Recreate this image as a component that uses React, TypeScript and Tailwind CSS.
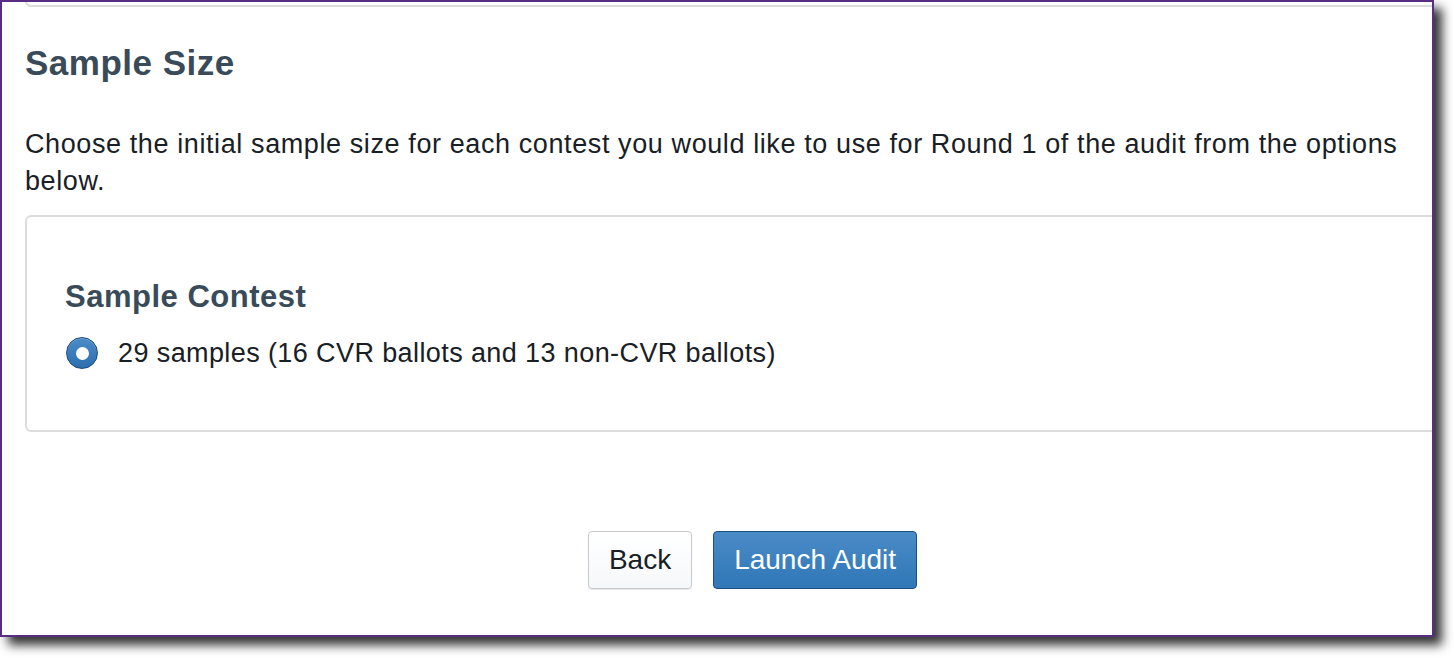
import React from "react";

export default function App() {
  const font = { fontFamily: '"Liberation Sans", Arial, Helvetica, sans-serif' };
  return (
    <div className="w-[1454px] h-[658px] bg-white overflow-hidden" style={font}>
      <div className="w-[1434px] h-[637px] border-2 border-[#5a2d84] bg-white overflow-hidden shadow-[8px_8px_10px_rgba(0,0,0,0.8)]">
        <div className="w-[1478px] pl-[23px]">
          {/* bottom of previous card */}
          <div className="h-[5px] overflow-hidden flex flex-col justify-end">
            <div className="h-[20px] shrink-0 border-2 border-[#dcdcdc] rounded-[6px]" />
          </div>

          <h2 className="mt-[36px] text-[35px] leading-[40px] font-bold tracking-[0.5px] text-[#394b59]">
            Sample Size
          </h2>

          <p className="mt-[43px] max-w-[1420px] text-[27px] leading-[37px] tracking-[0.6px] text-[#182026]">
            Choose the initial sample size for each contest you would like to use for Round 1 of the audit from the options below.
          </p>

          <div className="mt-[15px] border-2 border-[#dcdcdc] rounded-[6px] pl-[38px] pt-[62px] pb-[59px]">
            <h3 className="text-[31px] leading-[36px] font-bold tracking-[0.5px] text-[#394b59]">
              Sample Contest
            </h3>
            <label className="mt-[20px] flex items-center gap-[20px] h-[36px]">
              <span className="ml-[1px] w-[32px] h-[32px] rounded-full bg-gradient-to-b from-[#4a8bca] to-[#2d6fae] border-[1.5px] border-[#1d4a78] flex items-center justify-center shadow-[inset_0_1px_0_rgba(255,255,255,0.25)]">
                <span className="w-[13px] h-[13px] rounded-full bg-white" />
              </span>
              <span className="text-[27px] leading-[36px] tracking-[0.4px] text-[#182026]">
                29 samples (16 CVR ballots and 13 non-CVR ballots)
              </span>
            </label>
          </div>

          <div className="mt-[99px] flex justify-center gap-[21px]">
            <button className="h-[58px] px-[20px] rounded-[4px] border border-[#c7c9cc] bg-gradient-to-b from-white to-[#f5f8fa] text-[28px] text-[#182026] shadow-[0_1px_1px_rgba(16,22,26,0.1)]">
              Back
            </button>
            <button className="h-[58px] px-[20px] rounded-[4px] border border-[#1f4f7d] bg-gradient-to-b from-[#4a8bc7] to-[#2f77b7] text-[28px] text-white">
              Launch Audit
            </button>
          </div>
        </div>
      </div>
    </div>
  );
}
